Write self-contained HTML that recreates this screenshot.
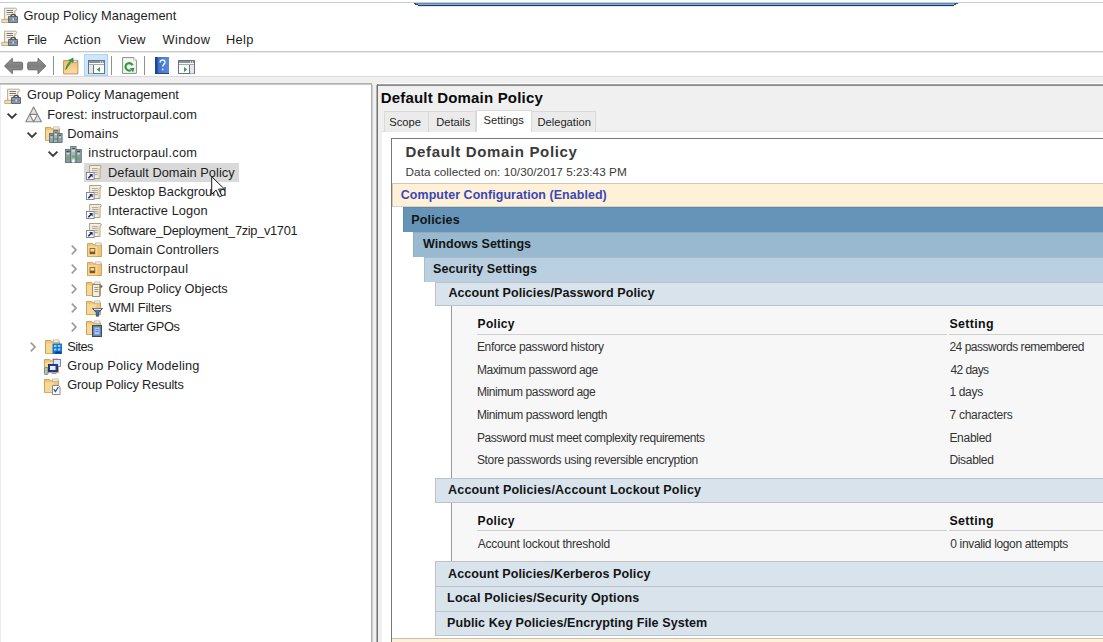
<!DOCTYPE html>
<html><head><meta charset="utf-8"><style>
html,body{margin:0;padding:0;}
body{width:1103px;height:642px;overflow:hidden;position:relative;background:#fff;font-family:"Liberation Sans",sans-serif;}
.t{position:absolute;white-space:nowrap;}
.r{position:absolute;}
.ic{position:absolute;overflow:visible;}
</style></head><body>
<div class="r" style="left:0px;top:2px;width:1103px;height:1px;background:#c9cdd5;"></div>
<div class="r" style="left:414px;top:3px;width:544px;height:1px;background:#5f89b6;"></div>
<div class="r" style="left:416px;top:4px;width:540px;height:1px;background:#88aed6;"></div>
<div class="r" style="left:414px;top:3px;width:2px;height:1px;background:#34507c;"></div>
<div class="r" style="left:415px;top:4px;width:3px;height:1px;background:#2a4470;"></div>
<div class="r" style="left:955px;top:3px;width:3px;height:1px;background:#34507c;"></div>
<div class="r" style="left:954px;top:4px;width:2px;height:1px;background:#2a4470;"></div>
<div class="r" style="left:418px;top:5px;width:536px;height:1px;background:#1f3a62;"></div>
<div class="r" style="left:418px;top:6px;width:536px;height:1px;background:#dbe8f5;"></div>
<svg class="ic" style="left:1.0px;top:7.0px" width="17" height="16" viewBox="0 0 17 16"><path d="M3.6 1.2h10.6c.9 0 1.5.5 1.5 1.3s-.6 1.3-1.5 1.3h-.4V12.5H3.6z" fill="#f7f2e6" stroke="#aea389" stroke-width=".9"/><path d="M5.5 3.5h6.5M5.5 5.5h6.5" stroke="#777" stroke-width="1"/><path d="M5.5 7.5h4" stroke="#aaa" stroke-width="1"/><path d="M.8 12.3h8.4v3.2H.8z" fill="#f0ddb0" stroke="#b59f72" stroke-width=".8"/><path d="M7.5 9.5h9v6H7.5z" fill="#8898a8" stroke="#5e6c7a" stroke-width="1"/><path d="M9.8 9.6c0-1.5.9-2.2 2.4-2.2s2.4.7 2.4 2.2" fill="none" stroke="#54473a" stroke-width="1.4"/><path d="M7.8 12.4h8.8" stroke="#6a7888" stroke-width=".8"/><rect x="11.5" y="11.6" width="1.4" height="1.8" fill="#e6edf4"/></svg>
<div class="t" style="left:23.5px;top:5.56px;font-size:12.8px;line-height:20px;font-weight:normal;color:#1e1e1e;letter-spacing:0.059px;">Group Policy Management</div>
<svg class="ic" style="left:1.0px;top:30.0px" width="17" height="16" viewBox="0 0 17 16"><path d="M3.6 1.2h10.6c.9 0 1.5.5 1.5 1.3s-.6 1.3-1.5 1.3h-.4V12.5H3.6z" fill="#f7f2e6" stroke="#aea389" stroke-width=".9"/><path d="M5.5 3.5h6.5M5.5 5.5h6.5" stroke="#777" stroke-width="1"/><path d="M5.5 7.5h4" stroke="#aaa" stroke-width="1"/><path d="M.8 12.3h8.4v3.2H.8z" fill="#f0ddb0" stroke="#b59f72" stroke-width=".8"/><path d="M7.5 9.5h9v6H7.5z" fill="#8898a8" stroke="#5e6c7a" stroke-width="1"/><path d="M9.8 9.6c0-1.5.9-2.2 2.4-2.2s2.4.7 2.4 2.2" fill="none" stroke="#54473a" stroke-width="1.4"/><path d="M7.8 12.4h8.8" stroke="#6a7888" stroke-width=".8"/><rect x="11.5" y="11.6" width="1.4" height="1.8" fill="#e6edf4"/></svg>
<div class="t" style="left:27.0px;top:29.56px;font-size:12.8px;line-height:20px;font-weight:normal;color:#1e1e1e;letter-spacing:-0.233px;">File</div>
<div class="t" style="left:64.0px;top:29.56px;font-size:12.8px;line-height:20px;font-weight:normal;color:#1e1e1e;letter-spacing:0.24px;">Action</div>
<div class="t" style="left:118.0px;top:29.56px;font-size:12.8px;line-height:20px;font-weight:normal;color:#1e1e1e;letter-spacing:0.0px;">View</div>
<div class="t" style="left:162.4px;top:29.56px;font-size:12.8px;line-height:20px;font-weight:normal;color:#1e1e1e;letter-spacing:0.44px;">Window</div>
<div class="t" style="left:226.0px;top:29.56px;font-size:12.8px;line-height:20px;font-weight:normal;color:#1e1e1e;letter-spacing:0.333px;">Help</div>
<div class="r" style="left:0px;top:51px;width:1103px;height:1px;background:#cbc8c8;"></div>
<div class="r" style="left:0px;top:52px;width:1103px;height:1px;background:#ebebeb;"></div>
<div class="r" style="left:84px;top:54px;width:24px;height:22px;background:#cde6fb;box-shadow:inset 0 0 0 1px #a9d5f7"></div>
<svg class="ic" style="left:3px;top:57px" width="46" height="18" viewBox="0 0 46 18">
<defs><linearGradient id="ag" x1="0" y1="0" x2="0" y2="1"><stop offset="0" stop-color="#9a9a9a"/><stop offset=".5" stop-color="#7e7e7e"/><stop offset="1" stop-color="#949494"/></linearGradient></defs>
<path d="M1.5 9L9.3 1.3v3.9h8.9c1 0 1.4.5 1.4 1.4v4.8c0 1-.5 1.4-1.4 1.4H9.3v3.9z" fill="url(#ag)" stroke="#6a6a6a" stroke-width="1" stroke-linejoin="round"/>
<path d="M42.8 9L35 1.3v3.9h-8.9c-1 0-1.4.5-1.4 1.4v4.8c0 1 .5 1.4 1.4 1.4H35v3.9z" fill="url(#ag)" stroke="#6a6a6a" stroke-width="1" stroke-linejoin="round"/>
</svg><div class="r" style="left:53px;top:56px;width:1px;height:19px;background:#909090;"></div>
<div class="r" style="left:111px;top:56px;width:1px;height:19px;background:#909090;"></div>
<div class="r" style="left:144px;top:56px;width:1px;height:19px;background:#909090;"></div>
<svg class="ic" style="left:63px;top:57px" width="16" height="18" viewBox="0 0 16 18">
<defs><linearGradient id="fg" x1="0" y1="0" x2="0" y2="1"><stop offset="0" stop-color="#f0bd72"/><stop offset="1" stop-color="#fcdca2"/></linearGradient></defs>
<path d="M.6 3.6h14.3v13.3H.6z" fill="url(#fg)" stroke="#c0935a" stroke-width="1"/>
<path d="M10.5 3.2h3.6v2.4h-3.6z" fill="#ececec" stroke="#8a8a8a" stroke-width=".6"/>
<path d="M2.6 12.8C3.2 9.2 4.6 6.5 7 4.4L5.6 3.2 10.2 1 9.8 5.6 8.6 4.6C6.6 7 5 9.8 2.6 12.8z" fill="#3a9e3c" stroke="#23782a" stroke-width=".5"/>
</svg><svg class="ic" style="left:88px;top:60px" width="17" height="14" viewBox="0 0 17 14">
<rect x="0.5" y="0.5" width="16" height="13" fill="#fbfbfb" stroke="#6a7480"/>
<rect x="1" y="1" width="15" height="2" fill="#8a939c"/>
<rect x="12" y="1.5" width="1" height="1" fill="#fff"/><rect x="14" y="1.5" width="1" height="1" fill="#fff"/>
<rect x="1" y="4" width="15" height="1" fill="#a4abb2"/>
<rect x="4.8" y="5" width="1.2" height="8.5" fill="#6a7480"/>
<path d="M2.9 6.5v6" stroke="#a0a8b0" stroke-width="1" stroke-dasharray="1 1"/>
<rect x="1" y="5" width="3.8" height="8.5" fill="#e4e8ec"/>
<path d="M12 7v5l-3.2-2.5z" fill="#3c9e3c"/>
</svg><svg class="ic" style="left:178px;top:60px" width="17" height="14" viewBox="0 0 17 14">
<rect x="0.5" y="0.5" width="16" height="13" fill="#fbfbfb" stroke="#6a7480"/>
<rect x="1" y="1" width="15" height="2" fill="#8a939c"/>
<rect x="12" y="1.5" width="1" height="1" fill="#fff"/><rect x="14" y="1.5" width="1" height="1" fill="#fff"/>
<rect x="1" y="4" width="15" height="1" fill="#a4abb2"/>
<rect x="11" y="5" width="1.2" height="8.5" fill="#6a7480"/>
<path d="M14.1 6.5v6" stroke="#a0a8b0" stroke-width="1" stroke-dasharray="1 1"/>
<rect x="12.2" y="5" width="3.8" height="8.5" fill="#e4e8ec"/>
<path d="M6 7v5l3.2-2.5z" fill="#3c9e3c"/>
</svg><svg class="ic" style="left:122px;top:57px" width="15" height="17" viewBox="0 0 15 17">
<path d="M.6 .6h11.2l2.6 2.6v13.2H.6z" fill="#f6f6f6" stroke="#8c8c8c" stroke-width="1"/>
<path d="M11.8 .6v2.6h2.6" fill="#fff" stroke="#a0a0a0" stroke-width=".7"/>
<path d="M10.6 8.2A3.7 3.7 0 1 0 8.8 13.2" fill="none" stroke="#2f9a40" stroke-width="2.3"/>
<path d="M7.6 11.2l4.8-.4-1.2 4.6z" fill="#2f9a40"/>
</svg><svg class="ic" style="left:155px;top:57px" width="14" height="17" viewBox="0 0 14 17">
<defs><linearGradient id="hg" x1="0" y1="0" x2="1" y2="0"><stop offset="0" stop-color="#3c6cc0"/><stop offset="1" stop-color="#5a8ad8"/></linearGradient></defs>
<rect x="0" y="0" width="14" height="17" fill="url(#hg)"/>
<rect x="0" y="0" width="2.6" height="17" fill="#1d4594"/>
<rect x="0" y="16" width="14" height="1" fill="#1d4594"/>
<path d="M5.2 5.4c0-1.6 1-2.5 2.4-2.5s2.4.9 2.4 2.3c0 1.9-2.2 2-2.2 4.3" fill="none" stroke="#e6f0ff" stroke-width="1.5"/>
<rect x="6.9" y="11.6" width="1.6" height="1.7" fill="#e6f0ff"/>
</svg><div class="r" style="left:0px;top:76px;width:1103px;height:1px;background:#dadada;"></div>
<div class="r" style="left:0px;top:77px;width:1103px;height:6px;background:#f0f0f0;"></div>
<div class="r" style="left:0px;top:83px;width:372px;height:1px;background:#b2b2b2;"></div>
<div class="r" style="left:0px;top:84px;width:372px;height:1px;background:#c6c6c6;"></div>
<div class="r" style="left:371px;top:83px;width:1px;height:559px;background:#b0b0b0;"></div>
<div class="r" style="left:0px;top:85px;width:1px;height:557px;background:#ececec;"></div>
<div class="r" style="left:372px;top:83px;width:5px;height:559px;background:#f0f0f0;"></div>
<div class="r" style="left:372px;top:85px;width:1px;height:557px;background:#cdcdcd;"></div>
<div class="r" style="left:376px;top:85px;width:1px;height:557px;background:#b0b0b0;"></div>
<div class="r" style="left:377px;top:84px;width:726px;height:558px;background:#f0f0f0;"></div>
<div class="r" style="left:377px;top:84px;width:726px;height:1px;background:#a0a0a0;"></div>
<div class="r" style="left:377px;top:85px;width:726px;height:1px;background:#8a8a8a;"></div>
<div class="r" style="left:377px;top:84px;width:1px;height:558px;background:#737373;"></div>
<div class="t" style="left:380.7px;top:87.80px;font-size:15px;line-height:20px;font-weight:bold;color:#0a0a0a;letter-spacing:0.185px;">Default Domain Policy</div>
<div class="r" style="left:381px;top:131px;width:722px;height:1px;background:#e2e2e2;"></div>
<div class="r" style="left:384px;top:111px;width:45px;height:21px;background:#ebebeb;box-shadow:inset 1px 1px 0 #d9d9d9, inset -1px 0 0 #d9d9d9"></div>
<div class="t" style="left:389.3px;top:112.12px;font-size:11.2px;line-height:20px;font-weight:normal;color:#1e1e1e;">Scope</div>
<div class="r" style="left:428px;top:111px;width:48px;height:21px;background:#ebebeb;box-shadow:inset 1px 1px 0 #d9d9d9, inset -1px 0 0 #d9d9d9"></div>
<div class="t" style="left:436.2px;top:112.12px;font-size:11.2px;line-height:20px;font-weight:normal;color:#1e1e1e;">Details</div>
<div class="r" style="left:531px;top:111px;width:65px;height:21px;background:#ebebeb;box-shadow:inset 1px 1px 0 #d9d9d9, inset -1px 0 0 #d9d9d9"></div>
<div class="t" style="left:537.4px;top:112.12px;font-size:11.2px;line-height:20px;font-weight:normal;color:#1e1e1e;">Delegation</div>
<div class="r" style="left:476px;top:110px;width:56px;height:23px;background:#ffffff;box-shadow:inset 1px 1px 0 #d9d9d9, inset -1px 0 0 #d9d9d9"></div>
<div class="t" style="left:483.5px;top:110.12px;font-size:11.2px;line-height:20px;font-weight:normal;color:#1e1e1e;">Settings</div>
<div class="r" style="left:382px;top:132px;width:721px;height:510px;background:#ffffff;"></div>
<div class="r" style="left:391px;top:138px;width:712px;height:504px;background:#ffffff;box-shadow:inset 1px 1px 0 #777777"></div>
<div class="t" style="left:405.6px;top:142.30px;font-size:15px;line-height:20px;font-weight:bold;color:#3a3a3a;letter-spacing:0.645px;">Default Domain Policy</div>
<div class="t" style="left:405.6px;top:162.33px;font-size:11.75px;line-height:20px;font-weight:normal;color:#3a3a3a;letter-spacing:0.041px;">Data collected on: 10/30/2017 5:23:43 PM</div>
<div class="r" style="left:392px;top:183px;width:711px;height:24px;background:#fef1d8;box-shadow:inset 1px 1px 0 #cdc7bc, inset 0 -1px 0 #dcd4c4"></div>
<div class="t" style="left:400.8px;top:184.88px;font-size:12.45px;line-height:20px;font-weight:bold;color:#3a47b6;letter-spacing:0.068px;">Computer Configuration (Enabled)</div>
<div class="r" style="left:403px;top:207px;width:700px;height:25px;background:#6594b8;box-shadow:inset 1px 1px 0 #5f88aa"></div>
<div class="t" style="left:411.2px;top:209.65px;font-size:12.55px;line-height:20px;font-weight:bold;color:#141414;letter-spacing:0.157px;">Policies</div>
<div class="r" style="left:413px;top:232px;width:690px;height:25px;background:#98b9cf;box-shadow:inset 1px 1px 0 #8eabc0"></div>
<div class="t" style="left:423.1px;top:234.25px;font-size:12.55px;line-height:20px;font-weight:bold;color:#141414;letter-spacing:0.0px;">Windows Settings</div>
<div class="r" style="left:424px;top:257px;width:679px;height:25px;background:#bad0e1;box-shadow:inset 1px 1px 0 #aabdcc"></div>
<div class="t" style="left:433.0px;top:258.65px;font-size:12.55px;line-height:20px;font-weight:bold;color:#141414;letter-spacing:0.094px;">Security Settings</div>
<div class="r" style="left:435px;top:282px;width:668px;height:24px;background:#d8e3ec;box-shadow:inset 1px 1px 0 #bcc2c8, inset 0 -1px 0 #bcc2c8"></div>
<div class="t" style="left:448.4px;top:283.05px;font-size:12.55px;line-height:20px;font-weight:bold;color:#141414;letter-spacing:0.061px;">Account Policies/Password Policy</div>
<div class="r" style="left:451px;top:306px;width:652px;height:172px;background:#f7f7f7;box-shadow:inset 1px 0 0 #9a9a9a"></div>
<div class="t" style="left:477.6px;top:313.84px;font-size:12px;line-height:20px;font-weight:bold;color:#0f0f0f;letter-spacing:0.3px;">Policy</div>
<div class="t" style="left:949.4px;top:313.70px;font-size:12.4px;line-height:20px;font-weight:bold;color:#0f0f0f;letter-spacing:0.367px;">Setting</div>
<div class="r" style="left:477px;top:334px;width:470px;height:1px;background:#cfcfcf;"></div>
<div class="r" style="left:949px;top:334px;width:154px;height:1px;background:#cfcfcf;"></div>
<div class="t" style="left:476.9px;top:336.84px;font-size:12px;line-height:20px;font-weight:normal;color:#333333;letter-spacing:-0.335px;">Enforce password history</div>
<div class="t" style="left:949.4px;top:336.84px;font-size:12px;line-height:20px;font-weight:normal;color:#333333;letter-spacing:-0.473px;">24 passwords remembered</div>
<div class="t" style="left:476.9px;top:359.52px;font-size:12px;line-height:20px;font-weight:normal;color:#333333;letter-spacing:-0.463px;">Maximum password age</div>
<div class="t" style="left:950.4px;top:359.52px;font-size:12px;line-height:20px;font-weight:normal;color:#333333;letter-spacing:-0.55px;">42 days</div>
<div class="t" style="left:476.9px;top:382.20px;font-size:12px;line-height:20px;font-weight:normal;color:#333333;letter-spacing:-0.411px;">Minimum password age</div>
<div class="t" style="left:949.4px;top:382.20px;font-size:12px;line-height:20px;font-weight:normal;color:#333333;letter-spacing:-0.32px;">1 days</div>
<div class="t" style="left:476.9px;top:404.88px;font-size:12px;line-height:20px;font-weight:normal;color:#333333;letter-spacing:-0.4px;">Minimum password length</div>
<div class="t" style="left:949.4px;top:404.88px;font-size:12px;line-height:20px;font-weight:normal;color:#333333;letter-spacing:-0.245px;">7 characters</div>
<div class="t" style="left:476.9px;top:427.56px;font-size:12px;line-height:20px;font-weight:normal;color:#333333;letter-spacing:-0.422px;">Password must meet complexity requirements</div>
<div class="t" style="left:949.4px;top:427.56px;font-size:12px;line-height:20px;font-weight:normal;color:#333333;letter-spacing:-0.283px;">Enabled</div>
<div class="t" style="left:476.9px;top:450.24px;font-size:12px;line-height:20px;font-weight:normal;color:#333333;letter-spacing:-0.336px;">Store passwords using reversible encryption</div>
<div class="t" style="left:949.4px;top:450.24px;font-size:12px;line-height:20px;font-weight:normal;color:#333333;letter-spacing:-0.314px;">Disabled</div>
<div class="r" style="left:435px;top:478px;width:668px;height:25px;background:#d8e3ec;box-shadow:inset 1px 1px 0 #bcc2c8, inset 0 -1px 0 #bcc2c8"></div>
<div class="t" style="left:448.1px;top:479.85px;font-size:12.55px;line-height:20px;font-weight:bold;color:#141414;letter-spacing:0.142px;">Account Policies/Account Lockout Policy</div>
<div class="r" style="left:451px;top:503px;width:652px;height:58px;background:#f7f7f7;box-shadow:inset 1px 0 0 #9a9a9a"></div>
<div class="t" style="left:477.6px;top:510.84px;font-size:12px;line-height:20px;font-weight:bold;color:#0f0f0f;letter-spacing:0.3px;">Policy</div>
<div class="t" style="left:949.4px;top:510.70px;font-size:12.4px;line-height:20px;font-weight:bold;color:#0f0f0f;letter-spacing:0.367px;">Setting</div>
<div class="r" style="left:477px;top:530px;width:470px;height:1px;background:#cfcfcf;"></div>
<div class="r" style="left:949px;top:530px;width:154px;height:1px;background:#cfcfcf;"></div>
<div class="t" style="left:477.7px;top:533.84px;font-size:12px;line-height:20px;font-weight:normal;color:#333333;letter-spacing:-0.208px;">Account lockout threshold</div>
<div class="t" style="left:950.3px;top:533.84px;font-size:12px;line-height:20px;font-weight:normal;color:#333333;letter-spacing:-0.352px;">0 invalid logon attempts</div>
<div class="r" style="left:435px;top:561px;width:668px;height:26px;background:#d8e3ec;box-shadow:inset 1px 1px 0 #bcc2c8, inset 0 -1px 0 #bcc2c8"></div>
<div class="t" style="left:448.1px;top:563.65px;font-size:12.55px;line-height:20px;font-weight:bold;color:#141414;letter-spacing:0.071px;">Account Policies/Kerberos Policy</div>
<div class="r" style="left:435px;top:586px;width:668px;height:26px;background:#d8e3ec;box-shadow:inset 1px 1px 0 #bcc2c8, inset 0 -1px 0 #bcc2c8"></div>
<div class="t" style="left:447.1px;top:588.15px;font-size:12.55px;line-height:20px;font-weight:bold;color:#141414;letter-spacing:0.153px;">Local Policies/Security Options</div>
<div class="r" style="left:435px;top:611px;width:668px;height:25px;background:#d8e3ec;box-shadow:inset 1px 1px 0 #bcc2c8, inset 0 -1px 0 #bcc2c8"></div>
<div class="t" style="left:447.1px;top:612.65px;font-size:12.55px;line-height:20px;font-weight:bold;color:#141414;letter-spacing:0.068px;">Public Key Policies/Encrypting File System</div>
<div class="r" style="left:392px;top:638px;width:711px;height:4px;background:#fdf2d9;box-shadow:inset 0 1px 0 #c9c0b0"></div>
<div class="r" style="left:84px;top:163px;width:155px;height:19px;background:#d9d9d9;"></div>
<svg class="ic" style="left:4.4px;top:88.4px" width="17" height="16" viewBox="0 0 17 16"><path d="M3.6 1.2h10.6c.9 0 1.5.5 1.5 1.3s-.6 1.3-1.5 1.3h-.4V12.5H3.6z" fill="#f7f2e6" stroke="#aea389" stroke-width=".9"/><path d="M5.5 3.5h6.5M5.5 5.5h6.5" stroke="#777" stroke-width="1"/><path d="M5.5 7.5h4" stroke="#aaa" stroke-width="1"/><path d="M.8 12.3h8.4v3.2H.8z" fill="#f0ddb0" stroke="#b59f72" stroke-width=".8"/><path d="M7.5 9.5h9v6H7.5z" fill="#8898a8" stroke="#5e6c7a" stroke-width="1"/><path d="M9.8 9.6c0-1.5.9-2.2 2.4-2.2s2.4.7 2.4 2.2" fill="none" stroke="#54473a" stroke-width="1.4"/><path d="M7.8 12.4h8.8" stroke="#6a7888" stroke-width=".8"/><rect x="11.5" y="11.6" width="1.4" height="1.8" fill="#e6edf4"/></svg>
<div class="t" style="left:27.0px;top:85.26px;font-size:12.8px;line-height:20px;font-weight:normal;color:#1e1e1e;letter-spacing:0.018px">Group Policy Management</div>
<svg class="ic" style="left:24.8px;top:106.3px" width="18" height="17" viewBox="0 0 18 17"><path d="M8.6 1L.8 15.8h15.6z" fill="#e2e2e2" stroke="#858585" stroke-width="1.1" stroke-linejoin="round"/><path d="M4.7 8.4h7.8L8.6 15.8z" fill="#fbfbfb" stroke="#858585" stroke-width="1.1" stroke-linejoin="round"/></svg>
<div class="t" style="left:47.2px;top:104.60px;font-size:12.8px;line-height:20px;font-weight:normal;color:#1e1e1e;letter-spacing:0.072px">Forest: instructorpaul.com</div>
<svg class="ic" style="left:7.1px;top:111.5px" width="10" height="8" viewBox="0 0 10 8"><path d="M.6 1.6l4.4 4.3 4.4-4.3" fill="none" stroke="#383838" stroke-width="1.8"/></svg><svg class="ic" style="left:44.9px;top:126.4px" width="18" height="17" viewBox="0 0 18 17"><path d="M.5 1.5h5.2l1.3 1.3h7.5v11.7H.5z" fill="#f1c477" stroke="#c99a52" stroke-width=".9"/><path d="M1 4.2h9.2v10H1z" fill="#f8d896"/><path d="M8.5 .8h5.6v2.6H8.5z" fill="#ecebe4" stroke="#b4ab94" stroke-width=".6"/><rect x="4.5" y="7.5" width="4.2" height="9" fill="#8fa3aa" stroke="#56686e" stroke-width=".8"/><rect x="8.7" y="4.5" width="4.2" height="12" fill="#a5b6ba" stroke="#56686e" stroke-width=".8"/><rect x="12.9" y="7.5" width="4.2" height="9" fill="#8fa3aa" stroke="#56686e" stroke-width=".8"/><path d="M5.5 9.3h2.2M9.7 6.3h2.2M13.9 9.3h2.2" stroke="#394a50" stroke-width=".9"/><path d="M5.5 11.2h2.2M9.7 8.6h2.2M13.9 11.2h2.2" stroke="#e6efe6" stroke-width=".9"/><path d="M9.7 13h2.2" stroke="#5aa55a" stroke-width="2"/></svg>
<div class="t" style="left:67.2px;top:123.93px;font-size:12.8px;line-height:20px;font-weight:normal;color:#1e1e1e;letter-spacing:0.1px">Domains</div>
<svg class="ic" style="left:27.1px;top:130.9px" width="10" height="8" viewBox="0 0 10 8"><path d="M.6 1.6l4.4 4.3 4.4-4.3" fill="none" stroke="#383838" stroke-width="1.8"/></svg><svg class="ic" style="left:65.1px;top:146.1px" width="18" height="17" viewBox="0 0 18 17"><rect x=".5" y="3.5" width="5.2" height="13" fill="#8a9ca2" stroke="#56686e" stroke-width=".8"/><rect x="5.7" y=".5" width="5.4" height="16" fill="#a9b9bd" stroke="#56686e" stroke-width=".8"/><rect x="11.1" y="3.5" width="5.2" height="13" fill="#8a9ca2" stroke="#56686e" stroke-width=".8"/><path d="M1.6 5.4h3M6.8 2.4h3.2M12.2 5.4h3" stroke="#333f44" stroke-width="1"/><path d="M1.6 7.8h3M6.8 5h3.2M12.2 7.8h3" stroke="#e8f0e8" stroke-width="1"/><path d="M1.6 12.5h3M12.2 12.5h3M6.8 10.5h3.2" stroke="#63aa55" stroke-width="2.2"/><rect x="7.2" y="13.5" width="2.4" height="3" fill="#ffffff"/></svg>
<div class="t" style="left:88.2px;top:143.26px;font-size:12.8px;line-height:20px;font-weight:normal;color:#1e1e1e;letter-spacing:0.247px">instructorpaul.com</div>
<svg class="ic" style="left:47.5px;top:150.2px" width="10" height="8" viewBox="0 0 10 8"><path d="M.6 1.6l4.4 4.3 4.4-4.3" fill="none" stroke="#383838" stroke-width="1.8"/></svg><svg class="ic" style="left:85.8px;top:164.4px" width="17" height="16" viewBox="0 0 17 16"><path d="M3.6 1.5h10.4c.8 0 1.3.5 1.3 1.2s-.5 1.2-1.3 1.2v10.6H3.6z" fill="#f5eedb" stroke="#a39679" stroke-width=".9"/><path d="M6 4.6h6M6 6.6h6M8.5 8.6h3.5M8.5 10.6h3.5" stroke="#9d9d9d" stroke-width=".9"/><path d="M12.5 4v10" stroke="#eadcb8" stroke-width="1.5"/><rect x="0.5" y="8.5" width="7.6" height="7" fill="#fdfdff" stroke="#7d7d7d" stroke-width=".9"/><path d="M2.3 14.2l3.3-3.3" stroke="#1d2a8a" stroke-width="1.6"/><path d="M3.2 10h3.4v3.4z" fill="#1d2a8a"/></svg>
<div class="t" style="left:108.0px;top:162.59px;font-size:12.8px;line-height:20px;font-weight:normal;color:#1e1e1e;letter-spacing:0.035px">Default Domain Policy</div>
<svg class="ic" style="left:85.8px;top:183.8px" width="17" height="16" viewBox="0 0 17 16"><path d="M3.6 1.5h10.4c.8 0 1.3.5 1.3 1.2s-.5 1.2-1.3 1.2v10.6H3.6z" fill="#f5eedb" stroke="#a39679" stroke-width=".9"/><path d="M6 4.6h6M6 6.6h6M8.5 8.6h3.5M8.5 10.6h3.5" stroke="#9d9d9d" stroke-width=".9"/><path d="M12.5 4v10" stroke="#eadcb8" stroke-width="1.5"/><rect x="0.5" y="8.5" width="7.6" height="7" fill="#fdfdff" stroke="#7d7d7d" stroke-width=".9"/><path d="M2.3 14.2l3.3-3.3" stroke="#1d2a8a" stroke-width="1.6"/><path d="M3.2 10h3.4v3.4z" fill="#1d2a8a"/></svg>
<div class="t" style="left:108.0px;top:181.93px;font-size:12.8px;line-height:20px;font-weight:normal;color:#1e1e1e;letter-spacing:-0.024px">Desktop Background</div>
<svg class="ic" style="left:85.8px;top:203.1px" width="17" height="16" viewBox="0 0 17 16"><path d="M3.6 1.5h10.4c.8 0 1.3.5 1.3 1.2s-.5 1.2-1.3 1.2v10.6H3.6z" fill="#f5eedb" stroke="#a39679" stroke-width=".9"/><path d="M6 4.6h6M6 6.6h6M8.5 8.6h3.5M8.5 10.6h3.5" stroke="#9d9d9d" stroke-width=".9"/><path d="M12.5 4v10" stroke="#eadcb8" stroke-width="1.5"/><rect x="0.5" y="8.5" width="7.6" height="7" fill="#fdfdff" stroke="#7d7d7d" stroke-width=".9"/><path d="M2.3 14.2l3.3-3.3" stroke="#1d2a8a" stroke-width="1.6"/><path d="M3.2 10h3.4v3.4z" fill="#1d2a8a"/></svg>
<div class="t" style="left:108.0px;top:201.26px;font-size:12.8px;line-height:20px;font-weight:normal;color:#1e1e1e;letter-spacing:0.087px">Interactive Logon</div>
<svg class="ic" style="left:85.8px;top:222.4px" width="17" height="16" viewBox="0 0 17 16"><path d="M3.6 1.5h10.4c.8 0 1.3.5 1.3 1.2s-.5 1.2-1.3 1.2v10.6H3.6z" fill="#f5eedb" stroke="#a39679" stroke-width=".9"/><path d="M6 4.6h6M6 6.6h6M8.5 8.6h3.5M8.5 10.6h3.5" stroke="#9d9d9d" stroke-width=".9"/><path d="M12.5 4v10" stroke="#eadcb8" stroke-width="1.5"/><rect x="0.5" y="8.5" width="7.6" height="7" fill="#fdfdff" stroke="#7d7d7d" stroke-width=".9"/><path d="M2.3 14.2l3.3-3.3" stroke="#1d2a8a" stroke-width="1.6"/><path d="M3.2 10h3.4v3.4z" fill="#1d2a8a"/></svg>
<div class="t" style="left:108.0px;top:220.59px;font-size:12.8px;line-height:20px;font-weight:normal;color:#1e1e1e;letter-spacing:-0.307px">Software_Deployment_7zip_v1701</div>
<svg class="ic" style="left:86.8px;top:241.6px" width="16" height="16" viewBox="0 0 16 16"><path d="M.5 1.5h5.2l1.3 1.3h7.5v11.7H.5z" fill="#f1c477" stroke="#c99a52" stroke-width=".9"/><path d="M1 4.2h9.2v10H1z" fill="#f8d896"/><path d="M8.5 .8h5.6v2.6H8.5z" fill="#ecebe4" stroke="#b4ab94" stroke-width=".6"/><rect x="2.6" y="6.2" width="5.6" height="6" fill="#7b5a1e"/><rect x="3.4" y="7" width="4" height="2.6" fill="#f4d89e"/></svg>
<div class="t" style="left:108.0px;top:239.93px;font-size:12.8px;line-height:20px;font-weight:normal;color:#1e1e1e;letter-spacing:0.088px">Domain Controllers</div>
<svg class="ic" style="left:69.6px;top:244.9px" width="8" height="10" viewBox="0 0 8 10"><path d="M1.8 .6l4.2 4.4-4.2 4.4" fill="none" stroke="#9c9c9c" stroke-width="1.7"/></svg><svg class="ic" style="left:86.8px;top:260.9px" width="16" height="16" viewBox="0 0 16 16"><path d="M.5 1.5h5.2l1.3 1.3h7.5v11.7H.5z" fill="#f1c477" stroke="#c99a52" stroke-width=".9"/><path d="M1 4.2h9.2v10H1z" fill="#f8d896"/><path d="M8.5 .8h5.6v2.6H8.5z" fill="#ecebe4" stroke="#b4ab94" stroke-width=".6"/><rect x="2.6" y="6.2" width="5.6" height="6" fill="#7b5a1e"/><rect x="3.4" y="7" width="4" height="2.6" fill="#f4d89e"/></svg>
<div class="t" style="left:108.0px;top:259.26px;font-size:12.8px;line-height:20px;font-weight:normal;color:#1e1e1e;letter-spacing:0.246px">instructorpaul</div>
<svg class="ic" style="left:69.6px;top:264.2px" width="8" height="10" viewBox="0 0 8 10"><path d="M1.8 .6l4.2 4.4-4.2 4.4" fill="none" stroke="#9c9c9c" stroke-width="1.7"/></svg><svg class="ic" style="left:86.3px;top:281.0px" width="17" height="17" viewBox="0 0 17 17"><path d="M.5 1.5h5.2l1.3 1.3h7.5v11.7H.5z" fill="#f1c477" stroke="#c99a52" stroke-width=".9"/><path d="M1 4.2h9.2v10H1z" fill="#f8d896"/><path d="M8.5 .8h5.6v2.6H8.5z" fill="#ecebe4" stroke="#b4ab94" stroke-width=".6"/><path d="M6.5 3.5h8l-.8 1.2v10.8H6.5z" fill="#f5eedb" stroke="#8c7f66" stroke-width=".9"/><path d="M8.3 6.5h4M8.3 8.5h4M8.3 10.5h4" stroke="#8a8a8a" stroke-width=".9"/><circle cx="15.2" cy="5.5" r="1.2" fill="#6a6050"/></svg>
<div class="t" style="left:108.5px;top:278.59px;font-size:12.8px;line-height:20px;font-weight:normal;color:#1e1e1e;letter-spacing:-0.053px">Group Policy Objects</div>
<svg class="ic" style="left:69.6px;top:283.5px" width="8" height="10" viewBox="0 0 8 10"><path d="M1.8 .6l4.2 4.4-4.2 4.4" fill="none" stroke="#9c9c9c" stroke-width="1.7"/></svg><svg class="ic" style="left:86.3px;top:300.4px" width="17" height="17" viewBox="0 0 17 17"><path d="M.5 1.5h5.2l1.3 1.3h7.5v11.7H.5z" fill="#f1c477" stroke="#c99a52" stroke-width=".9"/><path d="M1 4.2h9.2v10H1z" fill="#f8d896"/><path d="M8.5 .8h5.6v2.6H8.5z" fill="#ecebe4" stroke="#b4ab94" stroke-width=".6"/><path d="M6.5 8.5h10l-3.8 4.2v3.5h-2.4v-3.5z" fill="#4f6f9c" stroke="#2b4470" stroke-width=".8"/><path d="M8 9.3h7" stroke="#dfe8f4" stroke-width="1.2"/></svg>
<div class="t" style="left:108.5px;top:297.93px;font-size:12.8px;line-height:20px;font-weight:normal;color:#1e1e1e;letter-spacing:-0.15px">WMI Filters</div>
<svg class="ic" style="left:69.6px;top:302.9px" width="8" height="10" viewBox="0 0 8 10"><path d="M1.8 .6l4.2 4.4-4.2 4.4" fill="none" stroke="#9c9c9c" stroke-width="1.7"/></svg><svg class="ic" style="left:86.3px;top:319.7px" width="17" height="17" viewBox="0 0 17 17"><path d="M.5 1.5h5.2l1.3 1.3h7.5v11.7H.5z" fill="#f1c477" stroke="#c99a52" stroke-width=".9"/><path d="M1 4.2h9.2v10H1z" fill="#f8d896"/><path d="M8.5 .8h5.6v2.6H8.5z" fill="#ecebe4" stroke="#b4ab94" stroke-width=".6"/><rect x="6.5" y="5.5" width="9" height="11" fill="#5a86c4" stroke="#3a3a3a" stroke-width=".9"/><rect x="8.5" y="7.5" width="5" height="7" fill="#a9c8ee"/><path d="M9.5 9.5h3M9.5 11.5h3" stroke="#4a70a8" stroke-width=".8"/></svg>
<div class="t" style="left:108.0px;top:317.26px;font-size:12.8px;line-height:20px;font-weight:normal;color:#1e1e1e;letter-spacing:-0.455px">Starter GPOs</div>
<svg class="ic" style="left:69.6px;top:322.2px" width="8" height="10" viewBox="0 0 8 10"><path d="M1.8 .6l4.2 4.4-4.2 4.4" fill="none" stroke="#9c9c9c" stroke-width="1.7"/></svg><svg class="ic" style="left:44.8px;top:338.8px" width="18" height="17" viewBox="0 0 18 17"><path d="M.5 1.5h5.2l1.3 1.3h7.5v11.7H.5z" fill="#f1c477" stroke="#c99a52" stroke-width=".9"/><path d="M1 4.2h9.2v10H1z" fill="#f8d896"/><path d="M8.5 .8h5.6v2.6H8.5z" fill="#ecebe4" stroke="#b4ab94" stroke-width=".6"/><rect x="7.5" y="4.5" width="9.5" height="10.5" fill="#1479d4"/><path d="M9 6h2.4v2H9zM12.9 6h2.4v2h-2.4zM9 9.4h2.4v2H9zM12.9 9.4h2.4v2h-2.4z" fill="#9fd0ff"/><rect x="10.2" y="12.6" width="6" height="2" fill="#063e8a"/></svg>
<div class="t" style="left:67.2px;top:336.59px;font-size:12.8px;line-height:20px;font-weight:normal;color:#1e1e1e;letter-spacing:-0.55px">Sites</div>
<svg class="ic" style="left:28.9px;top:341.5px" width="8" height="10" viewBox="0 0 8 10"><path d="M1.8 .6l4.2 4.4-4.2 4.4" fill="none" stroke="#9c9c9c" stroke-width="1.7"/></svg><svg class="ic" style="left:44.3px;top:358.4px" width="18" height="17" viewBox="0 0 18 17"><path d="M.5 1.5h5.2l1.3 1.3h7.5v11.7H.5z" fill="#f1c477" stroke="#c99a52" stroke-width=".9"/><path d="M1 4.2h9.2v10H1z" fill="#f8d896"/><path d="M8.5 .8h5.6v2.6H8.5z" fill="#ecebe4" stroke="#b4ab94" stroke-width=".6"/><rect x=".5" y="9.5" width="3.5" height="7" rx=".8" fill="#b7c6b2" stroke="#6b7a68" stroke-width=".8"/><rect x="9.5" y="1.5" width="7" height="7" fill="#dfe6f4" stroke="#5a6a9a" stroke-width=".8"/><rect x="4.5" y="6.5" width="9" height="7" fill="#1c3ca8" stroke="#0e246e" stroke-width=".8"/><rect x="6" y="8" width="5.5" height="4" fill="#e8eeff"/><path d="M7.5 15.5h5" stroke="#9aa0b0" stroke-width="1.2"/></svg>
<div class="t" style="left:67.2px;top:355.92px;font-size:12.8px;line-height:20px;font-weight:normal;color:#1e1e1e;letter-spacing:0.17px">Group Policy Modeling</div>
<svg class="ic" style="left:44.3px;top:377.7px" width="18" height="17" viewBox="0 0 18 17"><path d="M.5 1.5h5.2l1.3 1.3h7.5v11.7H.5z" fill="#f1c477" stroke="#c99a52" stroke-width=".9"/><path d="M1 4.2h9.2v10H1z" fill="#f8d896"/><path d="M8.5 .8h5.6v2.6H8.5z" fill="#ecebe4" stroke="#b4ab94" stroke-width=".6"/><path d="M8.5 7.5h6l1.5 1.5v7.5H8.5z" fill="#fafafa" stroke="#7e7e7e" stroke-width=".9"/><path d="M9.8 11.2l1.6 2.4 3-4.6" stroke="#2a58b0" stroke-width="1.3" fill="none"/></svg>
<div class="t" style="left:67.2px;top:375.26px;font-size:12.8px;line-height:20px;font-weight:normal;color:#1e1e1e;letter-spacing:-0.147px">Group Policy Results</div>
<svg class="ic" style="left:211px;top:175.5px" width="16" height="22" viewBox="0 0 16 22">
<path d="M.7 .7v17.6l4.4-4.2 3.3 6.8 2.4-1.1-3.3-6.7h6z" fill="#ffffff" stroke="#1a1a1a" stroke-width="1" stroke-linejoin="miter"/>
</svg>
</body></html>
